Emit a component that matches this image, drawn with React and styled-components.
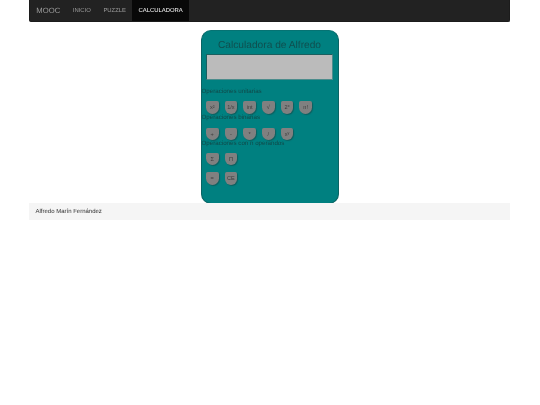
import React from "react";
import styled, { createGlobalStyle } from "styled-components";

const GlobalStyle = createGlobalStyle`
  html, body {
    margin: 0;
    padding: 0;
    background: #fff;
    font-family: "Liberation Sans", Arial, sans-serif;
    text-rendering: geometricPrecision;
  }
  * {
    box-sizing: border-box;
  }
`;

const Page = styled.div`
  width: 481px;
  margin: 0 0 0 29px;
  will-change: transform;
`;

const Navbar = styled.nav`
  display: flex;
  height: 22px;
  background: #222222;
  border-radius: 0 0 2px 2px;
  border: 1px solid #1c1c1c;
  border-top: 0;
`;

const Brand = styled.span`
  display: flex;
  align-items: center;
  padding: 0 6.3px;
  font-size: 7.7px;
  color: #9d9d9d;
`;

const NavItem = styled.a`
  display: flex;
  align-items: center;
  padding: 0 6.3px;
  font-size: 5.9px;
  color: ${(p) => (p.$active ? "#ffffff" : "#9d9d9d")};
  background: ${(p) => (p.$active ? "#080808" : "transparent")};
`;

const Calculator = styled.main`
  width: 138px;
  height: 174px;
  margin: 8px auto 0;
  padding: 8px 0 0;
  background: #008080;
  border-radius: 10px;
  border: 1px solid #0a6464;
  border-top-color: #067373;
`;

const Title = styled.h1`
  margin: 0;
  font-size: 10.2px;
  line-height: 13px;
  font-weight: 400;
  text-align: center;
  color: #0f4f4f;
`;

const Display = styled.div`
  width: 127px;
  height: 26px;
  margin: 2px 0 0 4.5px;
  background: #bbbbbb;
  border: 1px solid #1b5f5f;
  border-right-color: #4c8c8c;
  border-bottom-color: #4c8c8c;
`;

const SectionLabel = styled.p`
  margin: ${(p) => p.$top || 0}px 0 0;
  font-size: 6.2px;
  line-height: 8px;
  color: #104848;
  white-space: nowrap;
`;

const KeyRow = styled.div`
  display: flex;
  gap: 6.2px;
  margin: ${(p) => p.$top || 0}px 0 0 4.5px;
`;

const Key = styled.button`
  width: 12.5px;
  height: 12.5px;
  padding: 0;
  border: 0;
  font-family: inherit;
  font-size: 5.6px;
  line-height: 12px;
  white-space: nowrap;
  color: #3d3d3d;
  background: #808080;
  border-radius: 2px 2px 7px 7px;
  box-shadow: 1px 1px 1px #0d5f5f;
`;

const Footer = styled.footer`
  height: 17px;
  background: #f5f5f5;
  margin-top: -1px;
  padding: 1px 6.5px 0;
  display: flex;
  align-items: center;
  font-size: 6px;
  color: #333;
`;

const keyRows = {
  unary: ["x²", "1/x", "int", "√", "2ˣ", "n!"],
  binary: ["+", "-", "*", "/", "xʸ"],
  nary: ["Σ", "Π"],
  actions: ["=", "CE"],
};

function Keys({ items, top }) {
  return (
    <KeyRow $top={top}>
      {items.map((k) => (
        <Key key={k}>{k}</Key>
      ))}
    </KeyRow>
  );
}

export default function App() {
  return (
    <>
      <GlobalStyle />
      <Page>
        <Navbar>
          <Brand>MOOC</Brand>
          <NavItem>INICIO</NavItem>
          <NavItem>PUZZLE</NavItem>
          <NavItem $active>CALCULADORA</NavItem>
        </Navbar>
        <Calculator>
          <Title>Calculadora de Alfredo</Title>
          <Display />
          <SectionLabel $top={8}>Operaciones unitarias</SectionLabel>
          <Keys items={keyRows.unary} top={5} />
          <SectionLabel>Operaciones binarias</SectionLabel>
          <Keys items={keyRows.binary} top={6} />
          <SectionLabel>Operaciones con n operandos</SectionLabel>
          <Keys items={keyRows.nary} top={4.5} />
          <Keys items={keyRows.actions} top={7} />
        </Calculator>
        <Footer>Alfredo Marín Fernández</Footer>
      </Page>
    </>
  );
}
